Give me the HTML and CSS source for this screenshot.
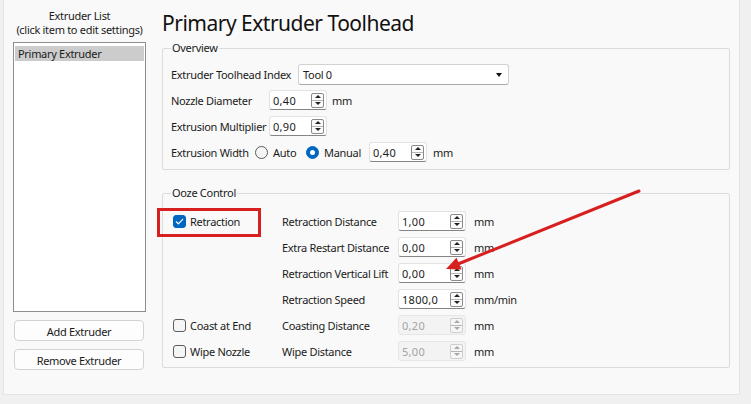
FILE: index.html
```html
<!DOCTYPE html>
<html>
<head>
<meta charset="utf-8">
<link rel="stylesheet" href="styles.css">
</head>
<body>
<div class="win">
  <aside class="left">
    <div class="list-title">Extruder List<br>(click item to edit settings)</div>
    <div class="list"><div class="item sel">Primary Extruder</div></div>
    <button class="btn">Add Extruder</button>
    <button class="btn">Remove Extruder</button>
  </aside>
  <main class="right">
    <h1 class="title">Primary Extruder Toolhead</h1>
    <fieldset class="group overview">
      <legend>Overview</legend>
      <div class="rows">
        <div class="row"><span class="lbl w-idx">Extruder Toolhead Index</span><div class="combo">Tool 0<span class="caret"></span></div></div>
        <div class="row"><span class="lbl w-nz">Nozzle Diameter</span><div class="spin s58"><span class="val">0,40</span><span class="arrows"><i class="up"></i><i class="dn"></i></span></div><span class="unit">mm</span></div>
        <div class="row"><span class="lbl w-nz">Extrusion Multiplier</span><div class="spin s58"><span class="val">0,90</span><span class="arrows"><i class="up"></i><i class="dn"></i></span></div></div>
        <div class="row"><span class="lbl w-ew">Extrusion Width</span>
          <span class="opt w-auto"><span class="radio"></span>Auto</span>
          <span class="opt w-man"><span class="radio on"></span>Manual</span>
          <div class="spin s58"><span class="val">0,40</span><span class="arrows"><i class="up"></i><i class="dn"></i></span></div><span class="unit u6">mm</span></div>
      </div>
    </fieldset>
    <fieldset class="group ooze">
      <legend>Ooze Control</legend>
      <div class="ogrid">
        <span class="chk"><span class="box on"><svg viewBox="0 0 13 13" width="13" height="13"><path d="M3.3 6.8 L5.4 8.8 L9.7 4.3" fill="none" stroke="#fff" stroke-width="1.2" stroke-linecap="round" stroke-linejoin="round"/></svg></span>Retraction</span>
        <span class="lbl">Retraction Distance</span>
        <div class="spin s68"><span class="val">1,00</span><span class="arrows"><i class="up"></i><i class="dn"></i></span></div><span class="unit u8">mm</span>

        <span></span>
        <span class="lbl">Extra Restart Distance</span>
        <div class="spin s68"><span class="val">0,00</span><span class="arrows"><i class="up"></i><i class="dn"></i></span></div><span class="unit u8">mm</span>

        <span></span>
        <span class="lbl">Retraction Vertical Lift</span>
        <div class="spin s68"><span class="val">0,00</span><span class="arrows"><i class="up"></i><i class="dn"></i></span></div><span class="unit u8">mm</span>

        <span></span>
        <span class="lbl">Retraction Speed</span>
        <div class="spin s68"><span class="val">1800,0</span><span class="arrows"><i class="up"></i><i class="dn"></i></span></div><span class="unit u8">mm/min</span>

        <span class="chk"><span class="box"></span>Coast at End</span>
        <span class="lbl">Coasting Distance</span>
        <div class="spin s68 dis"><span class="val">0,20</span><span class="arrows"><i class="up"></i><i class="dn"></i></span></div><span class="unit u8">mm</span>

        <span class="chk"><span class="box"></span>Wipe Nozzle</span>
        <span class="lbl">Wipe Distance</span>
        <div class="spin s68 dis"><span class="val">5,00</span><span class="arrows"><i class="up"></i><i class="dn"></i></span></div><span class="unit u8">mm</span>
      </div>
    </fieldset>
  </main>
</div>
<svg class="annot" width="751" height="404" viewBox="0 0 751 404">
  <rect x="158.5" y="209.5" width="101" height="26" fill="none" stroke="#d81f20" stroke-width="3"/>
  <line x1="639" y1="191" x2="458" y2="264" stroke="#d81f20" stroke-width="3" stroke-linecap="round"/>
  <polygon points="446,269 461.5,269.5 456.5,257.8" fill="#d81f20"/>
</svg>
</body>
</html>
```
FILE: styles.css
```css
* { box-sizing: border-box; }
html, body { margin: 0; padding: 0; }
body {
  width: 751px; height: 404px; overflow: hidden; position: relative;
  background: #f0f0f0;
  font-family: "Noto Sans", "Open Sans", sans-serif;
  font-size: 11px; letter-spacing: -0.3px; color: #1b1b1b;
}
.win {
  margin-left: 3px; width: 737px; height: 395px;
  background: #f9f9f9;
  border: 1px solid #e4e4e4; border-top: none;
  display: flex;
}
.left {
  width: 158px; flex: none;
  padding: 9px 0 0 9px;
  display: flex; flex-direction: column; align-items: flex-start;
}
.list-title { width: 133px; text-align: center; line-height: 14px; white-space: nowrap; }
.list {
  margin-top: 5px; width: 133px; height: 270px;
  background: #fff; border: 1px solid #8e8e8e;
  padding: 3px 1px;
}
.item { height: 15px; line-height: 16px; padding-left: 3px; }
.item.sel { background: #cccccc; }
.btn {
  margin: 8px 0 0 1px; width: 130px; height: 21px;
  background: #fdfdfd; border: 1px solid #d3d3d3; border-radius: 4px;
  font: inherit; letter-spacing: inherit; color: inherit; padding: 1px 0 0;
}
.btn + .btn { margin-top: 8px; }
.right { flex: 1; display: flex; flex-direction: column; }
.title {
  margin: 0; height: 41px; padding-top: 10px;
  font-weight: normal; font-size: 21px; letter-spacing: -0.5px; line-height: 26px; color: #111;
}
.group {
  margin: 0; width: 568px; min-width: 0;
  border: 1px solid #dcdcdc; border-radius: 2px;
  padding: 0 8px;
}
.group legend { padding: 0 1px; line-height: 14px; }
.overview { padding-top: 9px; padding-bottom: 7px; }
.ooze { margin-top: 16px; padding-top: 11px; padding-bottom: 6px; }
.rows { display: flex; flex-direction: column; gap: 6px; }
.row { display: flex; align-items: center; height: 20px; }
.lbl { white-space: nowrap; padding-top: 1px; }
.w-idx { width: 127px; }
.w-nz { width: 98px; }
.w-ew { width: 84px; }
.opt { display: flex; align-items: center; gap: 5px; padding-top: 1px; }
.opt .radio { margin-top: -1px; }
.w-auto { width: 51px; }
.w-man { width: 63px; }
.radio {
  width: 13px; height: 13px; border-radius: 50%;
  border: 1px solid #5a5a5a; background: #f6f6f6; flex: none;
}
.radio.on { background: #0067c0; border-color: #0067c0; position: relative; }
.radio.on::after {
  content: ""; position: absolute; left: 3px; top: 3px;
  width: 5px; height: 5px; border-radius: 50%; background: #fff;
}
.combo {
  width: 211px; height: 21px; background: #fff;
  border: 1px solid #d2d2d2; border-bottom-color: #a9a9a9; border-radius: 3px;
  display: flex; align-items: center; justify-content: space-between;
  padding: 1px 6px 0 4px;
}
.caret {
  width: 0; height: 0;
  border-left: 3.5px solid transparent; border-right: 3.5px solid transparent;
  border-top: 4px solid #111;
}
.spin {
  height: 20px; background: #fff;
  border: 1px solid #e2e2e2; border-bottom: 1px solid #858585; border-radius: 3px;
  display: flex; align-items: center; justify-content: space-between;
  padding: 0 2px 0 3px; flex: none;
}
.s58 { width: 58px; }
.s68 { width: 68px; }
.val { letter-spacing: 0.3px; padding-top: 1px; }
.arrows {
  width: 13px; height: 15px; border: 1px solid #8a8a8a; border-radius: 2px;
  display: flex; flex-direction: column; background: #fbfbfb;
}
.arrows i { flex: 1; display: flex; align-items: center; justify-content: center; }
.arrows i + i { border-top: 1px solid #b5b5b5; }
.arrows i::before {
  content: ""; width: 0; height: 0;
  border-left: 3px solid transparent; border-right: 3px solid transparent;
}
.up::before { border-bottom: 3px solid #222; }
.dn::before { border-top: 3px solid #222; }
.spin.dis { background: #f3f3f3; border-color: #e6e6e6; color: #a3a3a3; }
.spin.dis .arrows { border-color: #cfcfcf; background: #f6f6f6; }
.spin.dis .up::before { border-bottom-color: #a8a8a8; }
.spin.dis .dn::before { border-top-color: #a8a8a8; }
.unit { margin-left: 5px; padding-top: 1px; }
.u6 { margin-left: 6px; }
.u8 { margin-left: 8px; }
.ogrid {
  display: grid;
  grid-template-columns: 111px 116px 68px auto;
  grid-auto-rows: 20px; row-gap: 6px; align-items: center;
}
.chk { display: flex; align-items: center; gap: 4px; padding-left: 2px; white-space: nowrap; }
.box {
  width: 13px; height: 13px; border-radius: 3px; flex: none;
  border: 1px solid #5c5c5c; background: #f5f5f5; display: flex;
}
.box.on { background: #0067c0; border-color: #0067c0; }
.box svg { margin: -1px; }
.annot { position: absolute; left: 0; top: 0; pointer-events: none; }
```
